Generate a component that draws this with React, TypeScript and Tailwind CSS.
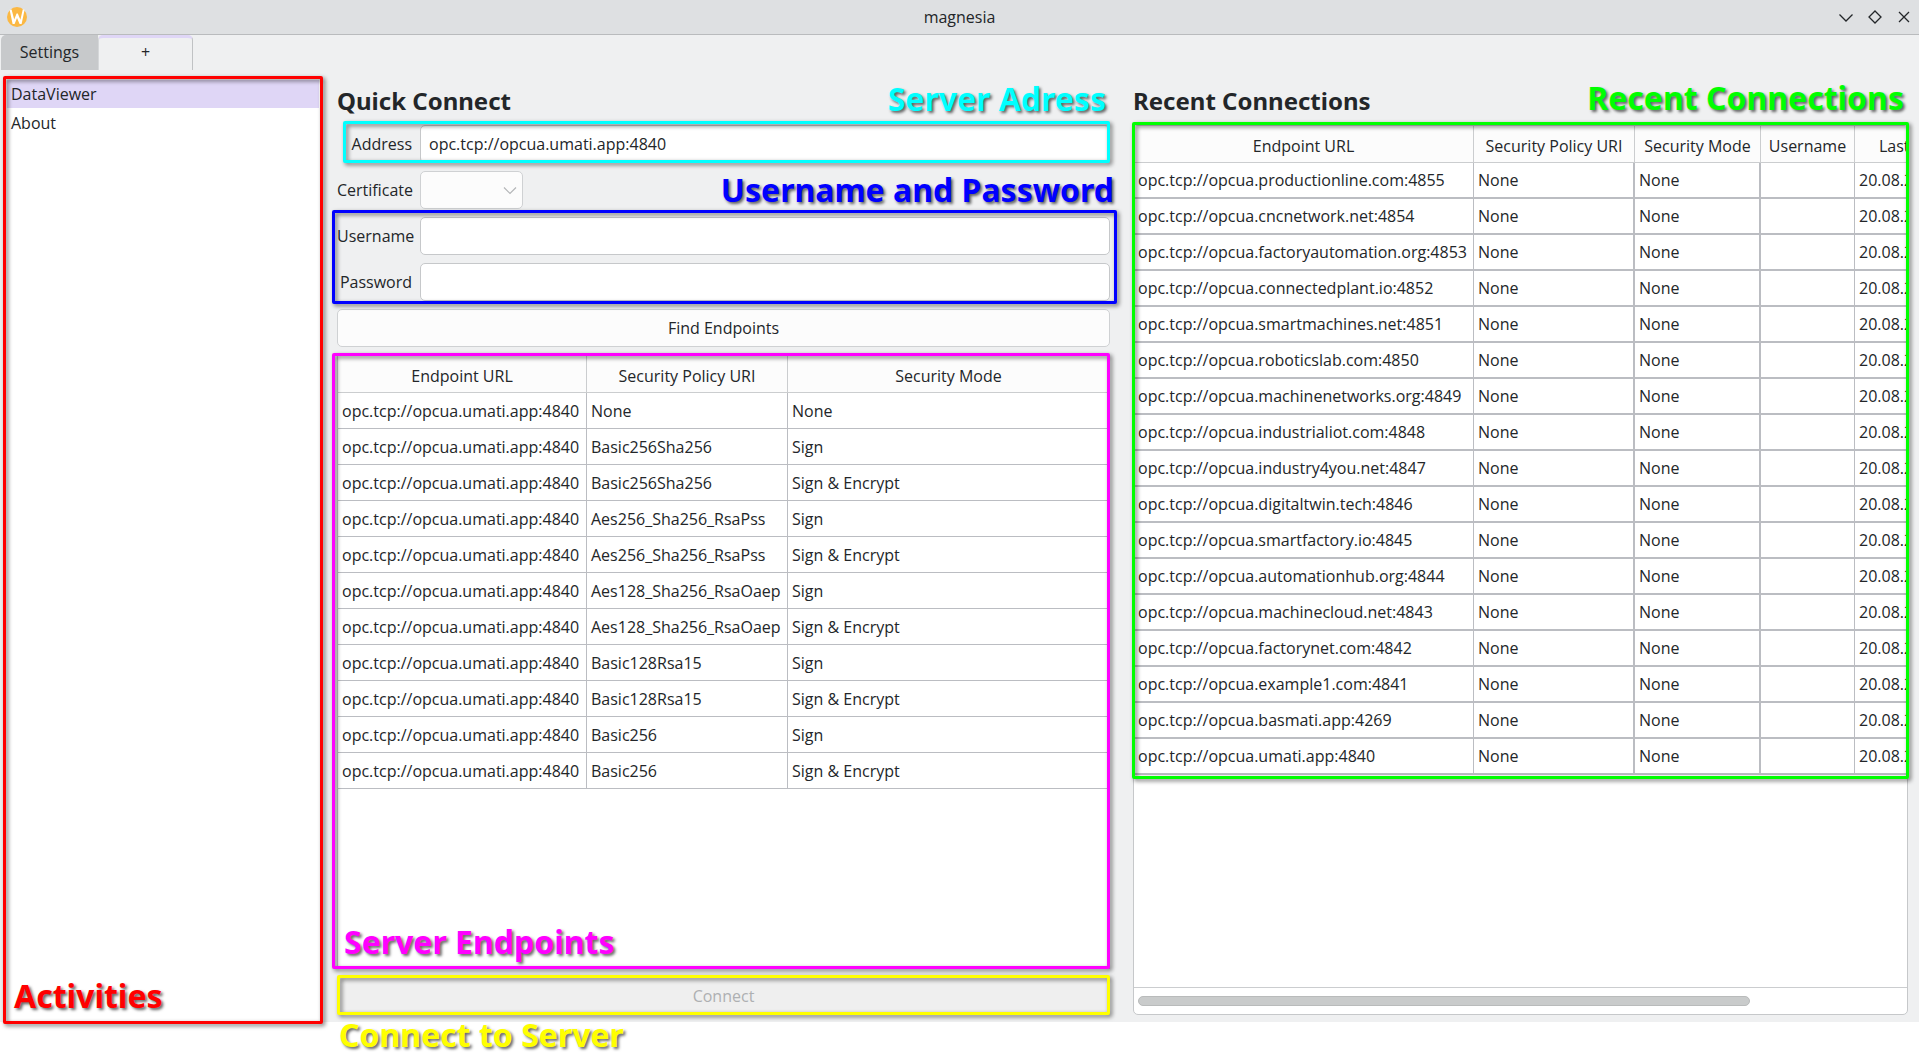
import React from "react";

const endpoints: [string, string][] = [
  ["None", "None"],
  ["Basic256Sha256", "Sign"],
  ["Basic256Sha256", "Sign & Encrypt"],
  ["Aes256_Sha256_RsaPss", "Sign"],
  ["Aes256_Sha256_RsaPss", "Sign & Encrypt"],
  ["Aes128_Sha256_RsaOaep", "Sign"],
  ["Aes128_Sha256_RsaOaep", "Sign & Encrypt"],
  ["Basic128Rsa15", "Sign"],
  ["Basic128Rsa15", "Sign & Encrypt"],
  ["Basic256", "Sign"],
  ["Basic256", "Sign & Encrypt"],
];

const recent = [
  "opc.tcp://opcua.productionline.com:4855",
  "opc.tcp://opcua.cncnetwork.net:4854",
  "opc.tcp://opcua.factoryautomation.org:4853",
  "opc.tcp://opcua.connectedplant.io:4852",
  "opc.tcp://opcua.smartmachines.net:4851",
  "opc.tcp://opcua.roboticslab.com:4850",
  "opc.tcp://opcua.machinenetworks.org:4849",
  "opc.tcp://opcua.industrialiot.com:4848",
  "opc.tcp://opcua.industry4you.net:4847",
  "opc.tcp://opcua.digitaltwin.tech:4846",
  "opc.tcp://opcua.smartfactory.io:4845",
  "opc.tcp://opcua.automationhub.org:4844",
  "opc.tcp://opcua.machinecloud.net:4843",
  "opc.tcp://opcua.factorynet.com:4842",
  "opc.tcp://opcua.example1.com:4841",
  "opc.tcp://opcua.basmati.app:4269",
  "opc.tcp://opcua.umati.app:4840",
];

/** Coloured outline drawn over a region of the window. */
function Outline({ className }: { className: string }) {
  return (
    <div
      aria-hidden="true"
      className={`pointer-events-none absolute z-10 rounded-xs border-3 drop-shadow-[2px_2px_2px_rgba(0,0,0,0.55)] ${className}`}
    />
  );
}

/** Large caption that names an outlined region. */
function Caption({ className, children }: { className: string; children: React.ReactNode }) {
  return (
    <p
      className={`pointer-events-none absolute z-20 font-['Noto_Sans',sans-serif] text-[32px] leading-10 font-bold whitespace-nowrap [text-shadow:2px_2px_3px_rgba(0,0,0,0.6)] ${className}`}
    >
      {children}
    </p>
  );
}

function TitleBar() {
  return (
    <header className="grid h-[35px] grid-cols-[1fr_auto_1fr] items-center border-b border-[#b9bbbd] bg-[#dee0e2] px-[7px]">
      <svg width="20" height="20" viewBox="0 0 20 20" aria-hidden="true">
        <circle cx="10" cy="10" r="10" fill="#fbb843" />
        <path
          d="M2.6 2.8 L4.6 2.4 L7.2 12.6 L9.6 6.6 L10.8 6.6 L13.4 12.8 L15.8 2.2 L17.6 2.8 L14.6 17 L12.6 17 L10 11 L7.6 17 L5.6 17 Z"
          fill="#fff"
        />
      </svg>
      <h1>magnesia</h1>
      <div className="flex justify-end gap-[13px]">
        <button aria-label="Minimize">
          <svg width="16" height="16" viewBox="0 0 16 16" fill="none" stroke="#232629" strokeWidth="1.3">
            <path d="M1.5 5.5 L8 12 L14.5 5.5" />
          </svg>
        </button>
        <button aria-label="Maximize">
          <svg width="16" height="16" viewBox="0 0 16 16" fill="none" stroke="#232629" strokeWidth="1.3">
            <path d="M8 2 L14 8 L8 14 L2 8 Z" />
          </svg>
        </button>
        <button aria-label="Close">
          <svg width="16" height="16" viewBox="0 0 16 16" fill="none" stroke="#232629" strokeWidth="1.3">
            <path d="M3 3 L13 13 M13 3 L3 13" />
          </svg>
        </button>
      </div>
    </header>
  );
}

function Field({
  id,
  label,
  type = "text",
  value,
}: {
  id: string;
  label: string;
  type?: string;
  value?: string;
}) {
  return (
    <div className="flex items-center gap-2">
      <label htmlFor={id} className="w-[75px] text-right">
        {label}
      </label>
      <input
        id={id}
        type={type}
        defaultValue={value}
        className="h-[38px] min-w-0 flex-1 rounded-[5px] border border-[#c6c8ca] bg-white px-2 outline-none"
      />
    </div>
  );
}

const headCell = "h-[37px] border-b border-[#cbcdcf] bg-[#fcfcfc] px-0 pt-[3px] pb-0 text-center font-normal";

function EndpointTable() {
  return (
    <table className="w-full table-fixed border-separate border-spacing-0">
      <colgroup>
        <col className="w-[249px]" />
        <col className="w-[201px]" />
        <col />
      </colgroup>
      <thead>
        <tr>
          <th className={`${headCell} border-r`}>Endpoint URL</th>
          <th className={`${headCell} border-r`}>Security Policy URI</th>
          <th className={headCell}>Security Mode</th>
        </tr>
      </thead>
      <tbody>
        {endpoints.map(([policy, mode], i) => (
          <tr key={i}>
            <td className="h-9 border-r border-b border-[#bbbdc2] py-0 pr-0 pl-1">opc.tcp://opcua.umati.app:4840</td>
            <td className="h-9 border-r border-b border-[#bbbdc2] py-0 pr-0 pl-1">{policy}</td>
            <td className="h-9 border-b border-[#bbbdc2] py-0 pr-0 pl-1">{mode}</td>
          </tr>
        ))}
      </tbody>
    </table>
  );
}

function RecentTable() {
  return (
    <table className="w-[886px] table-fixed border-separate border-spacing-0">
      <colgroup>
        <col className="w-[340px]" />
        <col className="w-[161px]" />
        <col className="w-[126px]" />
        <col className="w-[94px]" />
        <col className="w-[165px]" />
      </colgroup>
      <thead>
        <tr>
          <th className={`${headCell} border-r`}>Endpoint URL</th>
          <th className={`${headCell} border-r`}>Security Policy URI</th>
          <th className={`${headCell} border-r`}>Security Mode</th>
          <th className={`${headCell} border-r`}>Username</th>
          <th className={`${headCell} !pl-6 !text-left`}>Last</th>
        </tr>
      </thead>
      <tbody>
        {recent.map((url) => (
          <tr key={url}>
            <td className="h-9 border-r border-b-2 border-[#bbbdc2] py-0 pr-0 pl-1">{url}</td>
            <td className="h-9 border-r-2 border-b-2 border-[#bbbdc2] py-0 pr-0 pl-1">None</td>
            <td className="h-9 border-r-2 border-b-2 border-[#bbbdc2] py-0 pr-0 pl-1">None</td>
            <td className="h-9 border-r border-b-2 border-[#bbbdc2] py-0 pr-0 pl-1" />
            <td className="h-9 border-b-2 border-[#bbbdc2] py-0 pr-0 pl-1">20.08.2</td>
          </tr>
        ))}
      </tbody>
    </table>
  );
}

export default function App() {
  return (
    <div className="flex h-screen flex-col overflow-hidden bg-white pb-10 font-['Open_Sans','Noto_Sans',sans-serif] text-base leading-6 text-[#232629]">
      <div className="flex min-h-0 flex-1 flex-col bg-[#eff0f1]">
        <TitleBar />
        <nav className="flex h-[35px] shrink-0 pl-px">
          <button className="w-[97px] rounded-tl-[5px] bg-[#c7c9cb] pb-px">Settings</button>
          <button className="w-[95px] rounded-t-[5px] border-t-3 border-r border-l border-t-[#dfd6f6] border-r-[#c0c2c4] border-l-[#d5d7d9] pb-1">
            +
          </button>
        </nav>

        <main className="flex min-h-0 flex-1 pr-[11px] pl-1">
          <aside className="relative mt-[7px] w-[317px] shrink-0 bg-white pt-[3px] pr-0.5 pl-[3px]">
            <ul className="flex flex-col gap-px">
              <li>
                <button className="block w-full bg-[#dfd6f6] px-1 py-0.5 text-left">DataViewer</button>
              </li>
              <li>
                <button className="block w-full px-1 py-0.5 text-left">About</button>
              </li>
            </ul>
            <Outline className="-top-px -right-0.5 -bottom-0.5 -left-px border-[#ff0000]" />
            <Caption className="bottom-1.5 left-2.5 text-[#ff0000]">Activities</Caption>
          </aside>

          <section className="ml-4 flex min-w-0 flex-[773] flex-col gap-2 pt-[15px] pb-[7px]">
            <div className="relative">
              <h2 className="font-['Noto_Sans',sans-serif] text-2xl leading-8 font-bold">Quick Connect</h2>
              <Caption className="-top-1.5 right-1 text-[#00ffff]">Server Adress</Caption>
            </div>

            <div className="relative">
              <Field id="address" label="Address" value="opc.tcp://opcua.umati.app:4840" />
              <Outline className="-top-1 right-0 bottom-0 left-1.5 border-[#00ffff]" />
            </div>

            <div className="relative flex items-center gap-2">
              <label htmlFor="certificate" className="w-[75px] text-right">
                Certificate
              </label>
              <div className="relative">
                <select
                  id="certificate"
                  className="block h-[38px] w-[103px] appearance-none rounded-[5px] border border-[#cfd1d3] bg-[#fcfcfc]"
                />
                <svg
                  className="pointer-events-none absolute top-3 right-1.5"
                  width="14"
                  height="14"
                  viewBox="0 0 14 14"
                  fill="none"
                  stroke="#b4b6b8"
                  strokeWidth="1.2"
                  aria-hidden="true"
                >
                  <path d="M1 4.5 L7 10.5 L13 4.5" />
                </svg>
              </div>
              <Caption className="-right-1 -bottom-px text-[#0000ff]">Username and Password</Caption>
            </div>

            <div className="relative flex flex-col gap-2">
              <Field id="username" label="Username" />
              <Field id="password" label="Password" type="password" />
              <Outline className="-top-[7px] -right-[7px] -bottom-[3px] -left-[5px] border-[#0000ff]" />
            </div>

            <button className="h-[38px] shrink-0 rounded-[5px] border border-[#cfd1d3] bg-[#fcfcfc]">
              Find Endpoints
            </button>

            <div className="relative min-h-0 flex-1 border border-[#c6c8ca] bg-white">
              <EndpointTable />
              <Outline className="-top-[3px] -right-px -bottom-px -left-[6px] border-[#ff00ff]" />
              <Caption className="bottom-1.5 left-1.5 text-[#ff00ff]">Server Endpoints</Caption>
            </div>

            <div className="relative">
              <button disabled className="block h-[38px] w-full rounded-[5px] bg-[#efefef] text-[#aeb0b2]">
                Connect
              </button>
              <Outline className="-top-0.5 right-0 bottom-0 left-0 border-[#ffff00]" />
              <Caption className="top-full left-0.5 text-[#ffff00]">Connect to Server</Caption>
            </div>
          </section>

          <section className="ml-[23px] flex min-w-0 flex-[775] flex-col gap-2 pt-[15px] pb-[7px]">
            <div className="relative">
              <h2 className="font-['Noto_Sans',sans-serif] text-2xl leading-8 font-bold">Recent Connections</h2>
              <Caption className="-top-[7px] right-1 text-[#00ff00]">Recent Connections</Caption>
            </div>

            <div className="flex min-h-0 flex-1 flex-col rounded-[5px] border border-[#c6c8ca] bg-white">
              <div className="relative">
                <div className="overflow-hidden">
                  <RecentTable />
                </div>
                <Outline className="-top-1 -right-0.5 -bottom-1 -left-0.5 border-[#00ff00]" />
              </div>
              <div className="mt-auto border-t border-[#cbcdcf] px-1 pt-2 pb-2">
                <div className="h-[10px] w-4/5 rounded-full border border-[#b9bbbb] bg-[#c9cbcb]" />
              </div>
            </div>
          </section>
        </main>
      </div>
    </div>
  );
}
